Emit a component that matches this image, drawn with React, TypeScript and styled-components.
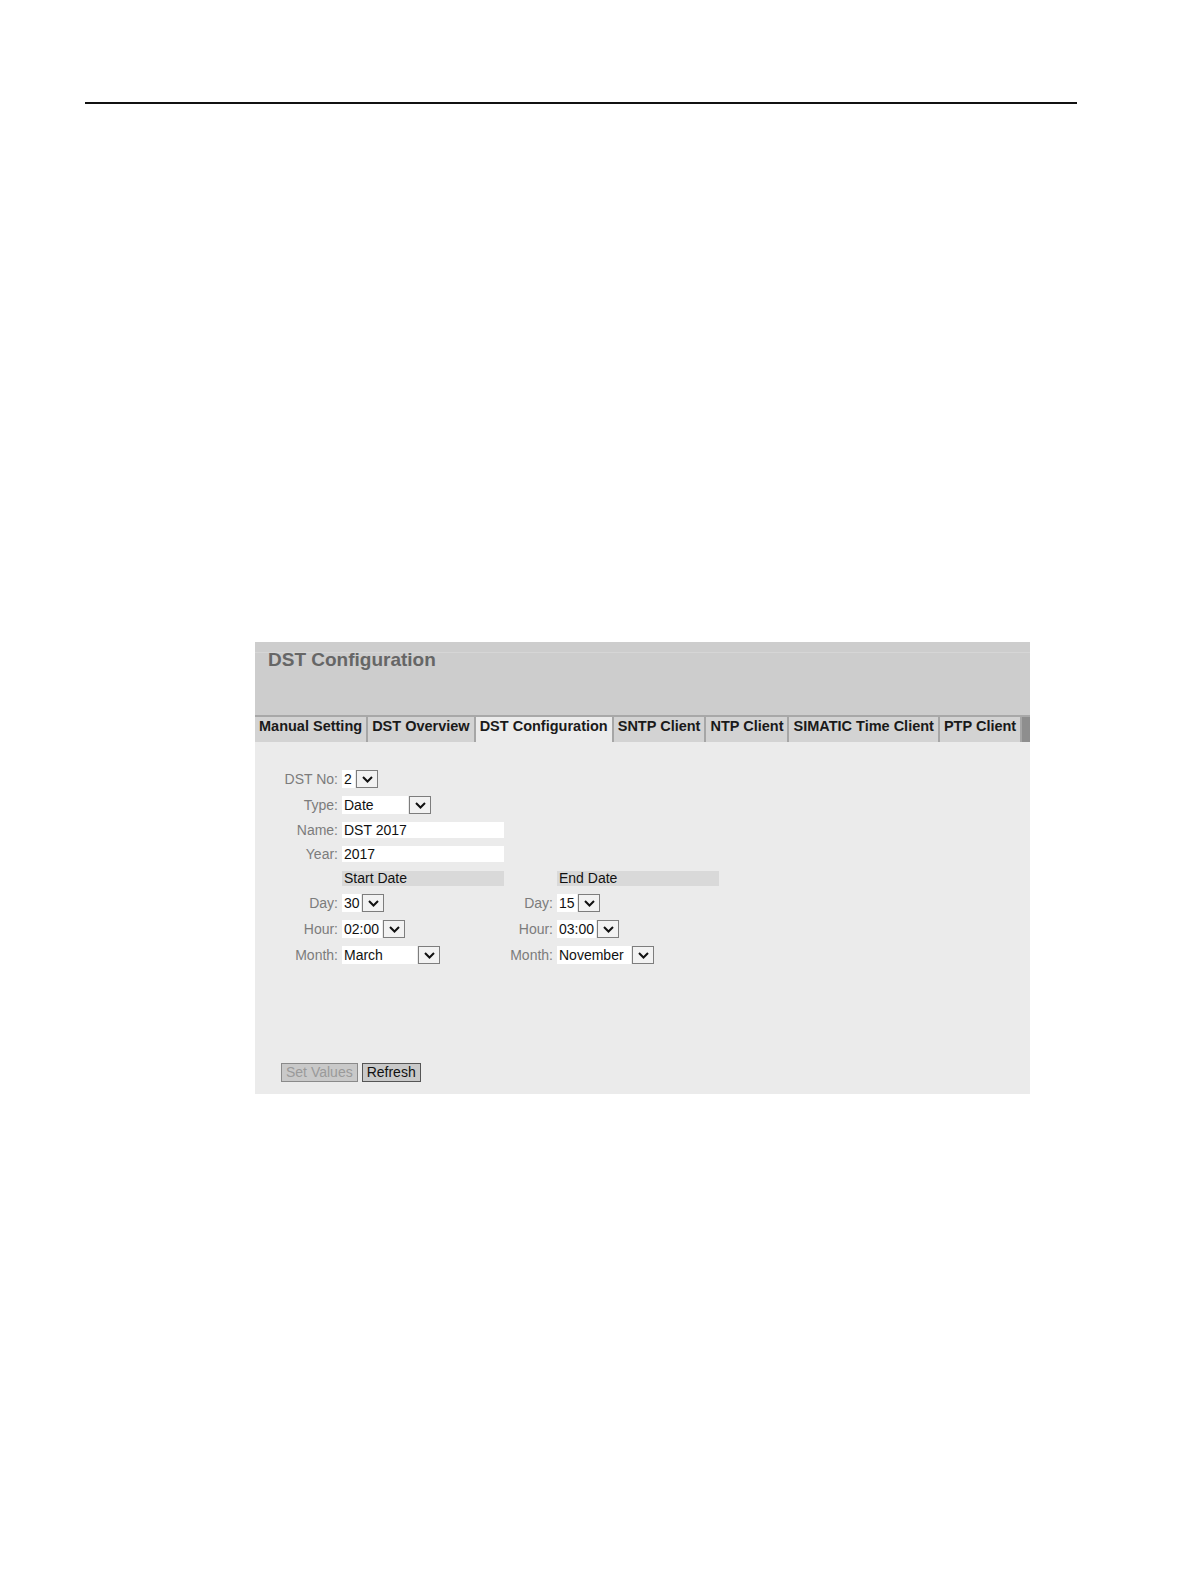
import React from "react";
import styled, { createGlobalStyle } from "styled-components";

const GlobalStyle = createGlobalStyle`
  html, body {
    margin: 0;
    padding: 0;
    background: #ffffff;
    font-family: "Liberation Sans", Arial, sans-serif;
  }
`;

const Page = styled.div`
  width: 1191px;
  height: 1587px;
  padding-top: 102px;
  box-sizing: border-box;
`;

const Rule = styled.div`
  margin-left: 85px;
  width: 992px;
  height: 2px;
  background: #111;
`;

const Panel = styled.div`
  margin: 538px 0 0 255px;
  width: 775px;
  display: flex;
  flex-direction: column;
`;

const Header = styled.div`
  height: 73px;
  box-sizing: border-box;
  padding: 7px 0 0 13px;
  background-image: linear-gradient(#cdcdcd 10px, #d6d6d6 10px, #d6d6d6 11px, #cdcdcd 11px);
`;

const Title = styled.h1`
  margin: 0;
  font-size: 19px;
  line-height: 22px;
  font-weight: bold;
  color: #666666;
`;

const TabBar = styled.div`
  display: flex;
  height: 27px;
  border-top: 2px solid #a8a8a8;
  background: #cfcfcf;
  box-sizing: border-box;
  overflow: hidden;
`;

const Tab = styled.div<{ $active?: boolean }>`
  flex-shrink: 0;
  padding: 0 4px;
  border-right: 2px solid #a6a6a6;
  background: ${(p) => (p.$active ? "#ebebeb" : "#d3d3d3")};
  font-size: 14.5px;
  font-weight: bold;
  line-height: 19px;
  color: #1a1a1a;
  white-space: nowrap;
`;

const TabEnd = styled.div`
  flex: 1;
  min-width: 0;
  background: #8e8e8e;
`;

const Content = styled.div`
  background: #ebebeb;
  padding: 24px 0 12px 0;
`;

const FormGrid = styled.div`
  display: grid;
  grid-template-columns: 84px 162px 47px 162px;
  column-gap: 3px;
  align-items: center;
`;

const Label = styled.div<{ $h: number }>`
  height: ${(p) => p.$h}px;
  display: flex;
  align-items: center;
  justify-content: flex-end;
  padding-right: 1px;
  font-size: 14px;
  color: #7c7c7c;
  white-space: nowrap;
`;

const Cell = styled.div<{ $h: number }>`
  height: ${(p) => p.$h}px;
  display: flex;
  align-items: center;
`;

const Spacer = styled.div`
  grid-column: span 2;
`;

const TextBox = styled.div`
  width: 162px;
  height: 16px;
  background: #ffffff;
  font-size: 14px;
  line-height: 16px;
  color: #111;
  padding-left: 2px;
  box-sizing: border-box;
`;

const SectionHead = styled.div`
  width: 162px;
  height: 15px;
  background: #d9d9d9;
  font-size: 14px;
  line-height: 15px;
  color: #111;
  padding-left: 2px;
  box-sizing: border-box;
`;

const SelectWrap = styled.div`
  display: inline-flex;
  align-items: center;
`;

const SelectValue = styled.div<{ $w: number }>`
  width: ${(p) => p.$w}px;
  height: 18px;
  background: #ffffff;
  font-size: 14px;
  line-height: 18px;
  color: #111;
  padding-left: 2px;
  box-sizing: border-box;
  white-space: nowrap;
`;

const SelectButton = styled.div`
  width: 22px;
  height: 18px;
  margin-left: 1px;
  box-sizing: border-box;
  border: 1px solid #7d7d7d;
  background: #f2f2f2;
  display: flex;
  align-items: center;
  justify-content: center;
`;

const Buttons = styled.div`
  display: flex;
  gap: 4px;
  margin: 95px 0 0 26px;
`;

const Button = styled.button<{ $disabled?: boolean }>`
  height: 19px;
  padding: 0 4px;
  font-family: "Liberation Sans", Arial, sans-serif;
  font-size: 14px;
  line-height: 17px;
  background: #c9c9c9;
  color: ${(p) => (p.$disabled ? "#9a9a9a" : "#111")};
  border: 1px solid ${(p) => (p.$disabled ? "#8a8a8a" : "#555")};
  border-radius: 0;
  box-sizing: border-box;
`;

function Chevron() {
  return (
    <svg width="11" height="7" viewBox="0 0 11 7">
      <polyline points="1,1 5.5,5.5 10,1" fill="none" stroke="#111" strokeWidth="2" />
    </svg>
  );
}

function Select({ value, width }: { value: string; width: number }) {
  return (
    <SelectWrap>
      <SelectValue $w={width}>{value}</SelectValue>
      <SelectButton>
        <Chevron />
      </SelectButton>
    </SelectWrap>
  );
}

const tabs = [
  "Manual Setting",
  "DST Overview",
  "DST Configuration",
  "SNTP Client",
  "NTP Client",
  "SIMATIC Time Client",
  "PTP Client",
];

export default function App() {
  return (
    <Page>
      <GlobalStyle />
      <Rule />
      <Panel>
        <Header>
          <Title>DST Configuration</Title>
        </Header>
        <TabBar>
          {tabs.map((t) => (
            <Tab key={t} $active={t === "DST Configuration"}>
              {t}
            </Tab>
          ))}
          <TabEnd />
        </TabBar>
        <Content>
          <FormGrid>
            <Label $h={26}>DST No:</Label>
            <Cell $h={26}>
              <Select value="2" width={13} />
            </Cell>
            <Spacer />

            <Label $h={26}>Type:</Label>
            <Cell $h={26}>
              <Select value="Date" width={66} />
            </Cell>
            <Spacer />

            <Label $h={24}>Name:</Label>
            <Cell $h={24}>
              <TextBox>DST 2017</TextBox>
            </Cell>
            <Spacer />

            <Label $h={24}>Year:</Label>
            <Cell $h={24}>
              <TextBox>2017</TextBox>
            </Cell>
            <Spacer />

            <Label $h={24} />
            <Cell $h={24}>
              <SectionHead>Start Date</SectionHead>
            </Cell>
            <Label $h={24} />
            <Cell $h={24}>
              <SectionHead>End Date</SectionHead>
            </Cell>

            <Label $h={26}>Day:</Label>
            <Cell $h={26}>
              <Select value="30" width={19} />
            </Cell>
            <Label $h={26}>Day:</Label>
            <Cell $h={26}>
              <Select value="15" width={20} />
            </Cell>

            <Label $h={26}>Hour:</Label>
            <Cell $h={26}>
              <Select value="02:00" width={40} />
            </Cell>
            <Label $h={26}>Hour:</Label>
            <Cell $h={26}>
              <Select value="03:00" width={39} />
            </Cell>

            <Label $h={26}>Month:</Label>
            <Cell $h={26}>
              <Select value="March" width={75} />
            </Cell>
            <Label $h={26}>Month:</Label>
            <Cell $h={26}>
              <Select value="November" width={74} />
            </Cell>
          </FormGrid>
          <Buttons>
            <Button $disabled>Set Values</Button>
            <Button>Refresh</Button>
          </Buttons>
        </Content>
      </Panel>
    </Page>
  );
}
